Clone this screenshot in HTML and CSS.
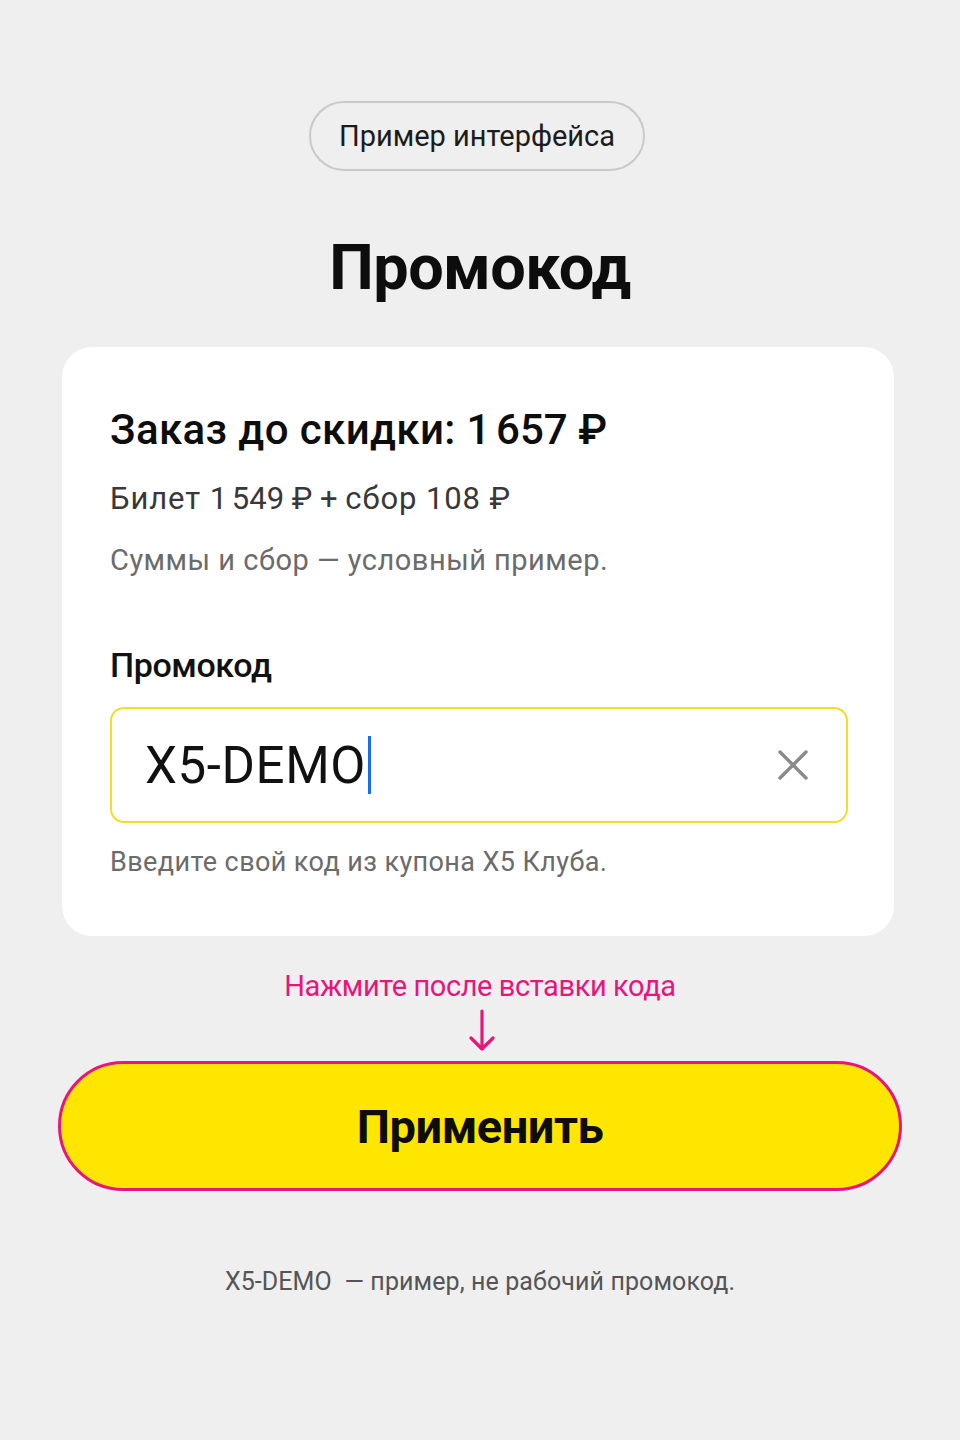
FILE: index.html
```html
<!DOCTYPE html>
<html lang="ru">
<head>
<meta charset="utf-8">
<title>Промокод</title>
<link rel="stylesheet" href="styles.css">
</head>
<body>
<main class="page">
  <div class="badge">Пример интерфейса</div>
  <h1 class="title">Промокод</h1>
  <section class="card">
    <h2 class="total">Заказ до скидки: 1&#8239;657 ₽</h2>
    <p class="breakdown">Билет 1&#8239;549 ₽ + сбор 108 ₽</p>
    <p class="note">Суммы и сбор — условный пример.</p>
    <label class="label" for="code">Промокод</label>
    <div class="field">
      <span class="value">X5-DEMO</span><span class="caret"></span>
      <span class="clear">
        <svg width="34" height="34" viewBox="0 0 34 34"><path d="M4 4 L30 30 M30 4 L4 30" stroke="#8a8a8a" stroke-width="3.4" stroke-linecap="round" fill="none"/></svg>
      </span>
    </div>
    <p class="help">Введите свой код из купона X5 Клуба.</p>
  </section>
  <div class="hint">Нажмите после вставки кода</div>
  <svg class="arrow" width="30" height="44" viewBox="0 0 30 44"><path d="M15 2 V40 M4 29 L15 40 L26 29" stroke="#e8167c" stroke-width="3.2" stroke-linecap="round" stroke-linejoin="round" fill="none"/></svg>
  <button class="apply">Применить</button>
  <p class="footer">X5-DEMO&nbsp; — пример, не рабочий промокод.</p>
</main>
</body>
</html>
```

FILE: styles.css
```css
html, body {
  margin: 0;
  padding: 0;
  background: #efefef;
}
body {
  font-family: Roboto, "Liberation Sans", sans-serif;
  color: #111;
}
.page {
  width: 960px;
  min-height: 1440px;
  display: flex;
  flex-direction: column;
  align-items: center;
  padding-top: 101px;
  box-sizing: border-box;
}
.badge {
  box-sizing: border-box;
  width: 336px;
  height: 70px;
  border: 2px solid #c9c9c9;
  border-radius: 35px;
  display: flex;
  align-items: center;
  justify-content: center;
  font-size: 29px;
  color: #1c1c1c;
  letter-spacing: 0;
  margin-left: -6px;
}
.title {
  margin: 59px 0 0;
  font-size: 63px;
  line-height: 76px;
  font-weight: 700;
  letter-spacing: -0.6px;
  color: #0d0d0d;
}
.card {
  box-sizing: border-box;
  width: 832px;
  margin-top: 41px;
  margin-left: -4px;
  background: #fff;
  border-radius: 30px;
  padding: 58px 46px 57px 48px;
  display: flex;
  flex-direction: column;
}
.total {
  margin: 0;
  font-size: 42px;
  line-height: 50px;
  font-weight: 500;
  color: #0d0d0d;
  letter-spacing: 0.4px;
}
.breakdown {
  margin: 25px 0 0;
  font-size: 31px;
  line-height: 38px;
  color: #383838;
  letter-spacing: 0.9px;
}
.note {
  margin: 24px 0 0;
  font-size: 29px;
  line-height: 36px;
  color: #6b6b6b;
  letter-spacing: 0.5px;
}
.label {
  margin-top: 67px;
  font-size: 34px;
  line-height: 40px;
  font-weight: 500;
  color: #111;
  letter-spacing: -0.4px;
}
.field {
  box-sizing: border-box;
  margin-top: 22px;
  height: 116px;
  border: 2px solid #f3dc2a;
  border-radius: 14px;
  display: flex;
  align-items: center;
  padding: 0 36px 0 33px;
}
.value {
  font-size: 51px;
  color: #111;
  letter-spacing: 0.6px;
}
.caret {
  width: 3px;
  height: 58px;
  background: #1a6cf0;
  margin-left: 2px;
}
.clear {
  margin-left: auto;
  display: flex;
}
.help {
  margin: 22px 0 0;
  font-size: 27px;
  line-height: 34px;
  color: #6b6b6b;
  letter-spacing: 0.4px;
}
.hint {
  margin-top: 33px;
  font-size: 29px;
  line-height: 34px;
  color: #e8167c;
  letter-spacing: -0.4px;
}
.arrow {
  display: block;
  margin-top: 6px;
  margin-left: 4px;
}
.apply {
  box-sizing: border-box;
  margin-top: 8px;
  width: 844px;
  height: 130px;
  background: #ffe600;
  border: 3px solid #e8167c;
  border-radius: 65px;
  font-family: Roboto, "Liberation Sans", sans-serif;
  font-size: 47px;
  font-weight: 700;
  color: #0d0d0d;
  letter-spacing: -0.5px;
}
.footer {
  margin: 75px 0 0;
  font-size: 25px;
  line-height: 32px;
  color: #555;
  letter-spacing: 0.1px;
}
```
